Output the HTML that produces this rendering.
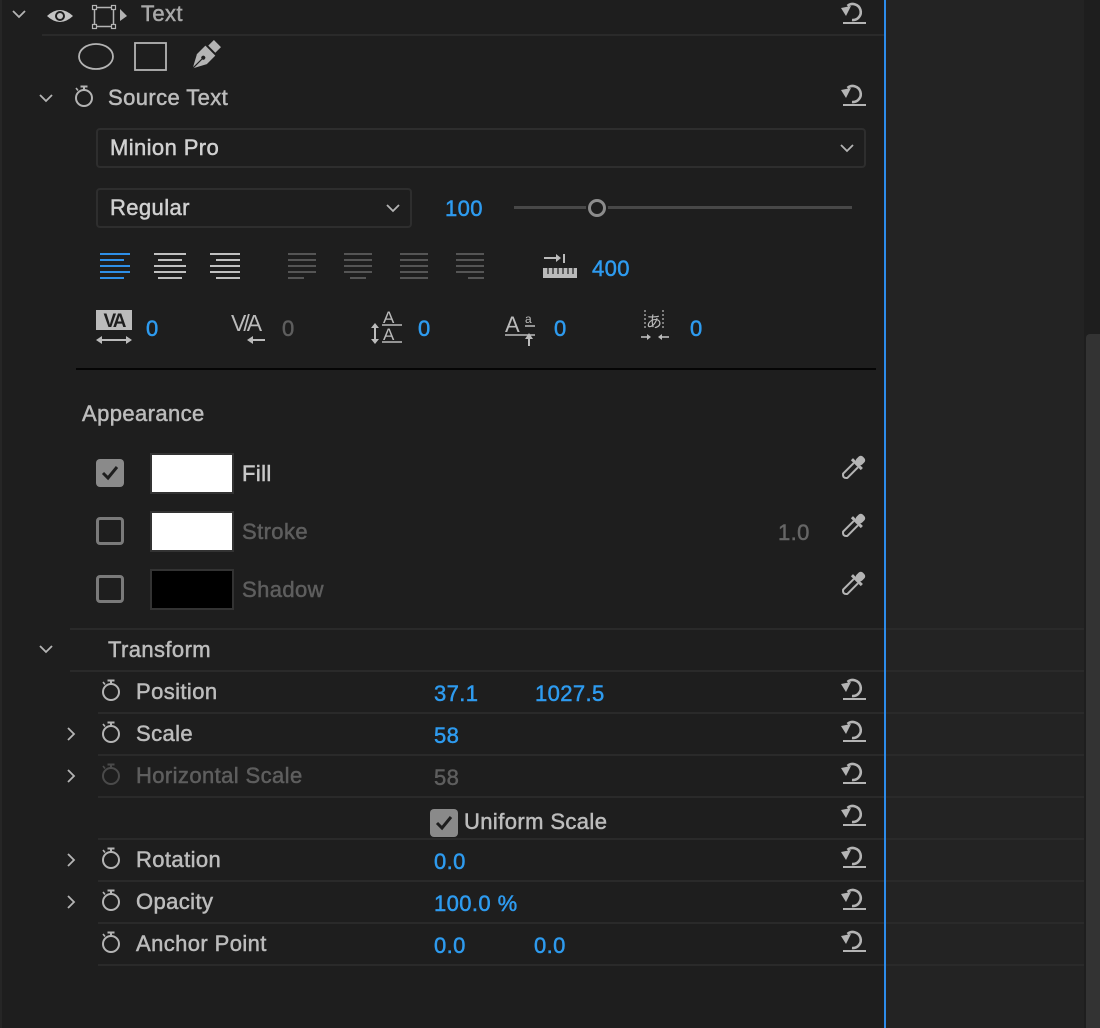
<!DOCTYPE html>
<html><head><meta charset="utf-8"><style>
*{margin:0;padding:0;box-sizing:border-box}
body{width:1100px;height:1028px;background:#1e1e1e;position:relative;overflow:hidden;font-family:"Liberation Sans",sans-serif;font-size:22px;color:#bcbcbc}
.a{position:absolute}
.t{position:absolute;line-height:24px;white-space:nowrap;letter-spacing:0.4px;-webkit-text-stroke:0.5px currentColor}
.b{color:#2e9bef}
.g{color:#5e5e5e}
.ln{position:absolute;height:2px;background:#2a2a2a}
svg{position:absolute;overflow:visible}
</style></head><body>
<!-- right area -->
<div class="a" style="left:886px;top:0;width:198px;height:1028px;background:#232323"></div>
<div class="a" style="left:1084px;top:0;width:16px;height:1028px;background:#1e1e1e"></div>
<div class="a" style="left:1086px;top:334px;width:14px;height:694px;background:#333;border-radius:4px 0 0 0"></div>
<div class="a" style="left:0;top:0;width:2px;height:1028px;background:#262626"></div>

<!-- defs -->
<svg width="0" height="0"><defs>
<g id="rst"><path d="M7.5 6 A8 8 0 1 1 12 20" fill="none" stroke="#b4b4b4" stroke-width="2.6"/><polygon points="1,8 11,6 6,16" fill="#b4b4b4"/><rect x="3" y="22" width="23" height="2" fill="#b4b4b4"/></g>
<g id="sw"><circle cx="10" cy="14" r="8" fill="none" stroke="currentColor" stroke-width="2"/><line x1="6.5" y1="2.5" x2="13.5" y2="2.5" stroke="currentColor" stroke-width="2"/><line x1="10" y1="2.5" x2="10" y2="6" stroke="currentColor" stroke-width="2"/><line x1="2" y1="4" x2="4" y2="6.5" stroke="currentColor" stroke-width="1.6"/></g>
<g id="chd"><polyline points="1,1 7,7 13,1" fill="none" stroke="#b4b4b4" stroke-width="1.8"/></g>
<g id="chr"><polyline points="1,1 7,7 1,13" fill="none" stroke="#b4b4b4" stroke-width="1.8"/></g>
<g id="eye"><g transform="rotate(45 15 15)"><rect x="11" y="0" width="8" height="9" rx="3" fill="#b4b4b4"/><rect x="8" y="8" width="14" height="3" fill="#b4b4b4"/><path d="M12 11 L12 26 Q15 30 18 26 L18 11" fill="none" stroke="#b4b4b4" stroke-width="2"/></g></g>
</defs></svg>

<!-- top row -->
<svg style="left:12px;top:10px" width="14" height="8"><use href="#chd"/></svg>
<svg style="left:46px;top:7px" width="28" height="18"><path d="M1 9 Q14 -3 27 9 Q14 21 1 9Z" fill="#c4c4c4"/><circle cx="14" cy="9" r="5" fill="#1e1e1e"/><circle cx="14" cy="9" r="3" fill="#c4c4c4"/></svg>
<svg style="left:92px;top:5px" width="36" height="24"><rect x="2.5" y="2.5" width="19" height="19" fill="none" stroke="#b4b4b4" stroke-width="1.5"/><g fill="#1e1e1e" stroke="#b4b4b4" stroke-width="1.2"><rect x="0.5" y="0.5" width="4" height="4"/><rect x="19.5" y="0.5" width="4" height="4"/><rect x="0.5" y="19.5" width="4" height="4"/><rect x="19.5" y="19.5" width="4" height="4"/></g><polygon points="28,4 35,11 28,16" fill="#b4b4b4"/></svg>
<div class="t" style="left:141px;top:2px;color:#a8a8a8">Text</div>
<svg style="left:840px;top:0px" width="26" height="26"><use href="#rst"/></svg>
<div class="ln" style="left:42px;top:34px;width:842px"></div>

<svg style="left:78px;top:43px" width="38" height="28"><ellipse cx="18" cy="13.5" rx="17" ry="12.5" fill="none" stroke="#b4b4b4" stroke-width="1.8"/></svg>
<svg style="left:134px;top:42px" width="34" height="30"><rect x="1" y="1" width="31" height="27" fill="none" stroke="#b4b4b4" stroke-width="1.8"/></svg>
<svg style="left:187px;top:40px" width="34" height="34"><g transform="rotate(45 17 17)"><rect x="12" y="-2" width="10" height="8" fill="#b4b4b4"/><path d="M10 8 L24 8 L24 20 L17 33 L10 20Z" fill="#b4b4b4"/><circle cx="17" cy="18" r="2" fill="#1e1e1e"/><line x1="17" y1="20" x2="17" y2="33" stroke="#1e1e1e" stroke-width="1.2"/></g></svg>

<!-- Source text -->
<svg style="left:39px;top:94px" width="14" height="8"><use href="#chd"/></svg>
<svg style="left:74px;top:84px;color:#b4b4b4" width="22" height="24"><use href="#sw"/></svg>
<div class="t" style="left:108px;top:86px">Source Text</div>
<svg style="left:840px;top:82px" width="26" height="26"><use href="#rst"/></svg>

<div class="a" style="left:96px;top:128px;width:770px;height:40px;border:2px solid #2e2e2e;border-radius:4px"></div>
<div class="t" style="left:110px;top:136px;color:#d0d0d0">Minion Pro</div>
<svg style="left:840px;top:144px" width="14" height="8"><use href="#chd"/></svg>

<div class="a" style="left:96px;top:188px;width:316px;height:40px;border:2px solid #2e2e2e;border-radius:4px"></div>
<div class="t" style="left:110px;top:196px;color:#d0d0d0">Regular</div>
<svg style="left:386px;top:204px" width="14" height="8"><use href="#chd"/></svg>
<div class="t b" style="left:445px;top:197px">100</div>
<div class="a" style="left:514px;top:206px;width:338px;height:3px;background:#484848"></div>
<div class="a" style="left:586px;top:197px;width:22px;height:22px;border-radius:50%;background:#1e1e1e"></div>
<div class="a" style="left:588px;top:199px;width:18px;height:18px;border-radius:50%;border:3px solid #8c8c8c"></div>

<!-- align -->
<svg style="left:100px;top:252px" width="400" height="30">
<g stroke="#2e8fe8" stroke-width="2"><line x1="0" y1="2" x2="30" y2="2"/><line x1="0" y1="8" x2="24" y2="8"/><line x1="0" y1="14" x2="30" y2="14"/><line x1="0" y1="20" x2="30" y2="20"/><line x1="0" y1="26" x2="24" y2="26"/></g>
<g stroke="#c0c0c0" stroke-width="2"><line x1="54" y1="2" x2="86" y2="2"/><line x1="58" y1="8" x2="82" y2="8"/><line x1="54" y1="14" x2="86" y2="14"/><line x1="54" y1="20" x2="86" y2="20"/><line x1="58" y1="26" x2="82" y2="26"/></g>
<g stroke="#c0c0c0" stroke-width="2"><line x1="110" y1="2" x2="140" y2="2"/><line x1="116" y1="8" x2="140" y2="8"/><line x1="110" y1="14" x2="140" y2="14"/><line x1="110" y1="20" x2="140" y2="20"/><line x1="116" y1="26" x2="140" y2="26"/></g>
<g stroke="#555" stroke-width="2">
<line x1="188" y1="2" x2="216" y2="2"/><line x1="188" y1="8" x2="216" y2="8"/><line x1="188" y1="14" x2="216" y2="14"/><line x1="188" y1="20" x2="216" y2="20"/><line x1="188" y1="26" x2="204" y2="26"/>
<line x1="244" y1="2" x2="272" y2="2"/><line x1="244" y1="8" x2="272" y2="8"/><line x1="244" y1="14" x2="272" y2="14"/><line x1="244" y1="20" x2="272" y2="20"/><line x1="250" y1="26" x2="266" y2="26"/>
<line x1="300" y1="2" x2="328" y2="2"/><line x1="300" y1="8" x2="328" y2="8"/><line x1="300" y1="14" x2="328" y2="14"/><line x1="300" y1="20" x2="328" y2="20"/><line x1="300" y1="26" x2="328" y2="26"/>
<line x1="356" y1="2" x2="384" y2="2"/><line x1="356" y1="8" x2="384" y2="8"/><line x1="356" y1="14" x2="384" y2="14"/><line x1="356" y1="20" x2="384" y2="20"/><line x1="368" y1="26" x2="384" y2="26"/></g>
</svg>
<svg style="left:543px;top:254px" width="36" height="26"><line x1="1" y1="4" x2="14" y2="4" stroke="#bbb" stroke-width="2"/><polygon points="13,0 18,4 13,8" fill="#bbb"/><line x1="21" y1="0" x2="21" y2="9" stroke="#bbb" stroke-width="2"/><rect x="0" y="14" width="34" height="10" fill="#bbb"/><g stroke="#1e1e1e" stroke-width="1.2"><line x1="5" y1="14" x2="5" y2="20"/><line x1="10" y1="14" x2="10" y2="20"/><line x1="15" y1="14" x2="15" y2="20"/><line x1="20" y1="14" x2="20" y2="20"/><line x1="25" y1="14" x2="25" y2="20"/><line x1="30" y1="14" x2="30" y2="20"/></g></svg>
<div class="t b" style="left:592px;top:257px">400</div>

<!-- tracking row -->
<svg style="left:96px;top:310px" width="40" height="36"><rect x="0" y="0" width="36" height="20" fill="#bbb"/><text x="18" y="17" text-anchor="middle" font-family="Liberation Sans" font-weight="bold" font-size="19" fill="#1e1e1e" letter-spacing="-2">VA</text><line x1="3" y1="30" x2="33" y2="30" stroke="#bbb" stroke-width="2"/><polygon points="0,30 6,26 6,34" fill="#bbb"/><polygon points="36,30 30,26 30,34" fill="#bbb"/></svg>
<div class="t b" style="left:146px;top:317px">0</div>
<svg style="left:231px;top:310px" width="40" height="36"><text x="0" y="21" font-family="Liberation Sans" font-size="23" fill="#bbb" letter-spacing="-3">V/A</text><line x1="20" y1="30" x2="34" y2="30" stroke="#bbb" stroke-width="2"/><polygon points="16,30 22,26 22,34" fill="#bbb"/></svg>
<div class="t g" style="left:282px;top:317px">0</div>
<svg style="left:369px;top:307px" width="40" height="38"><text x="14" y="16" font-family="Liberation Sans" font-size="17" fill="#bbb">A</text><line x1="13" y1="18" x2="33" y2="18" stroke="#bbb" stroke-width="1.5"/><text x="14" y="33" font-family="Liberation Sans" font-size="17" fill="#bbb">A</text><line x1="13" y1="35" x2="33" y2="35" stroke="#bbb" stroke-width="1.5"/><line x1="6" y1="20" x2="6" y2="34" stroke="#bbb" stroke-width="2"/><polygon points="2,21 6,16 10,21" fill="#bbb"/><polygon points="2,32 6,37 10,32" fill="#bbb"/></svg>
<div class="t b" style="left:418px;top:317px">0</div>
<svg style="left:505px;top:310px" width="36" height="36"><text x="0" y="22" font-family="Liberation Sans" font-size="22" fill="#bbb">A</text><text x="20" y="13" font-family="Liberation Sans" font-size="12" fill="#bbb">a</text><line x1="0" y1="25" x2="30" y2="25" stroke="#bbb" stroke-width="1.5"/><line x1="20" y1="16" x2="30" y2="16" stroke="#bbb" stroke-width="1.5"/><line x1="24" y1="26" x2="24" y2="36" stroke="#bbb" stroke-width="2"/><polygon points="20,29 24,23 28,29" fill="#bbb"/></svg>
<div class="t b" style="left:554px;top:317px">0</div>
<svg style="left:641px;top:310px" width="36" height="36"><line x1="4" y1="0" x2="4" y2="18" stroke="#bbb" stroke-width="1.2" stroke-dasharray="2 2"/><line x1="22" y1="0" x2="22" y2="18" stroke="#bbb" stroke-width="1.2" stroke-dasharray="2 2"/><text x="5" y="17" font-family="Noto Sans CJK JP" font-size="16" fill="#bbb">あ</text><line x1="0" y1="27" x2="8" y2="27" stroke="#bbb" stroke-width="1.6"/><polygon points="10,27 6,24 6,30" fill="#bbb"/><line x1="20" y1="27" x2="28" y2="27" stroke="#bbb" stroke-width="1.6"/><polygon points="17,27 21,24 21,30" fill="#bbb"/></svg>
<div class="t b" style="left:690px;top:317px">0</div>

<div class="a" style="left:76px;top:368px;width:800px;height:2px;background:#050505"></div>

<!-- appearance -->
<div class="t" style="left:82px;top:402px">Appearance</div>
<div class="a" style="left:96px;top:459px;width:28px;height:28px;background:#8a8a8a;border-radius:4px"></div>
<svg style="left:101px;top:465px" width="18" height="16"><polyline points="2,8 7,13 16,2" fill="none" stroke="#1e1e1e" stroke-width="3"/></svg>
<div class="a" style="left:150px;top:453px;width:84px;height:41px;background:#fff;border:2px solid #333"></div>
<div class="t" style="left:242px;top:462px;color:#c8c8c8">Fill</div>
<svg style="left:838px;top:453px" width="30" height="30"><use href="#eye"/></svg>

<div class="a" style="left:96px;top:517px;width:28px;height:28px;border:3px solid #7a7a7a;border-radius:4px"></div>
<div class="a" style="left:150px;top:511px;width:84px;height:41px;background:#fff;border:2px solid #333"></div>
<div class="t g" style="left:242px;top:520px">Stroke</div>
<div class="t g" style="left:778px;top:521px;color:#666">1.0</div>
<svg style="left:838px;top:511px" width="30" height="30"><use href="#eye"/></svg>

<div class="a" style="left:96px;top:575px;width:28px;height:28px;border:3px solid #7a7a7a;border-radius:4px"></div>
<div class="a" style="left:150px;top:569px;width:84px;height:41px;background:#000;border:2px solid #333"></div>
<div class="t g" style="left:242px;top:578px">Shadow</div>
<svg style="left:838px;top:569px" width="30" height="30"><use href="#eye"/></svg>

<!-- transform -->
<div class="ln" style="left:70px;top:628px;width:1014px"></div>
<svg style="left:39px;top:645px" width="14" height="8"><use href="#chd"/></svg>
<div class="t" style="left:108px;top:638px">Transform</div>
<div class="ln" style="left:70px;top:670px;width:1014px"></div>

<svg style="left:101px;top:678px;color:#b4b4b4" width="22" height="24"><use href="#sw"/></svg>
<div class="t" style="left:136px;top:680px">Position</div>
<div class="t b" style="left:434px;top:682px">37.1</div>
<div class="t b" style="left:535px;top:682px">1027.5</div>
<svg style="left:840px;top:676px" width="26" height="26"><use href="#rst"/></svg>
<div class="ln" style="left:98px;top:712px;width:986px"></div>

<svg style="left:67px;top:727px" width="8" height="14"><use href="#chr"/></svg>
<svg style="left:101px;top:720px;color:#b4b4b4" width="22" height="24"><use href="#sw"/></svg>
<div class="t" style="left:136px;top:722px">Scale</div>
<div class="t b" style="left:434px;top:724px">58</div>
<svg style="left:840px;top:718px" width="26" height="26"><use href="#rst"/></svg>
<div class="ln" style="left:98px;top:754px;width:986px"></div>

<svg style="left:67px;top:769px" width="8" height="14"><use href="#chr"/></svg>
<svg style="left:101px;top:762px;color:#4a4a4a" width="22" height="24"><use href="#sw"/></svg>
<div class="t g" style="left:136px;top:764px">Horizontal Scale</div>
<div class="t g" style="left:434px;top:766px">58</div>
<svg style="left:840px;top:760px" width="26" height="26"><use href="#rst"/></svg>
<div class="ln" style="left:98px;top:796px;width:986px"></div>

<div class="a" style="left:430px;top:809px;width:28px;height:28px;background:#8a8a8a;border-radius:4px"></div>
<svg style="left:435px;top:815px" width="18" height="16"><polyline points="2,8 7,13 16,2" fill="none" stroke="#1e1e1e" stroke-width="3"/></svg>
<div class="t" style="left:464px;top:810px">Uniform Scale</div>
<svg style="left:840px;top:802px" width="26" height="26"><use href="#rst"/></svg>
<div class="ln" style="left:98px;top:838px;width:986px"></div>

<svg style="left:67px;top:853px" width="8" height="14"><use href="#chr"/></svg>
<svg style="left:101px;top:846px;color:#b4b4b4" width="22" height="24"><use href="#sw"/></svg>
<div class="t" style="left:136px;top:848px">Rotation</div>
<div class="t b" style="left:434px;top:850px">0.0</div>
<svg style="left:840px;top:844px" width="26" height="26"><use href="#rst"/></svg>
<div class="ln" style="left:98px;top:880px;width:986px"></div>

<svg style="left:67px;top:895px" width="8" height="14"><use href="#chr"/></svg>
<svg style="left:101px;top:888px;color:#b4b4b4" width="22" height="24"><use href="#sw"/></svg>
<div class="t" style="left:136px;top:890px">Opacity</div>
<div class="t b" style="left:434px;top:892px">100.0 %</div>
<svg style="left:840px;top:886px" width="26" height="26"><use href="#rst"/></svg>
<div class="ln" style="left:98px;top:922px;width:986px"></div>

<svg style="left:101px;top:930px;color:#b4b4b4" width="22" height="24"><use href="#sw"/></svg>
<div class="t" style="left:136px;top:932px">Anchor Point</div>
<div class="t b" style="left:434px;top:934px">0.0</div>
<div class="t b" style="left:534px;top:934px">0.0</div>
<svg style="left:840px;top:928px" width="26" height="26"><use href="#rst"/></svg>
<div class="ln" style="left:98px;top:964px;width:986px"></div>

<div class="a" style="left:884px;top:0;width:2px;height:1028px;background:#2d8ceb;z-index:5"></div>
</body></html>
